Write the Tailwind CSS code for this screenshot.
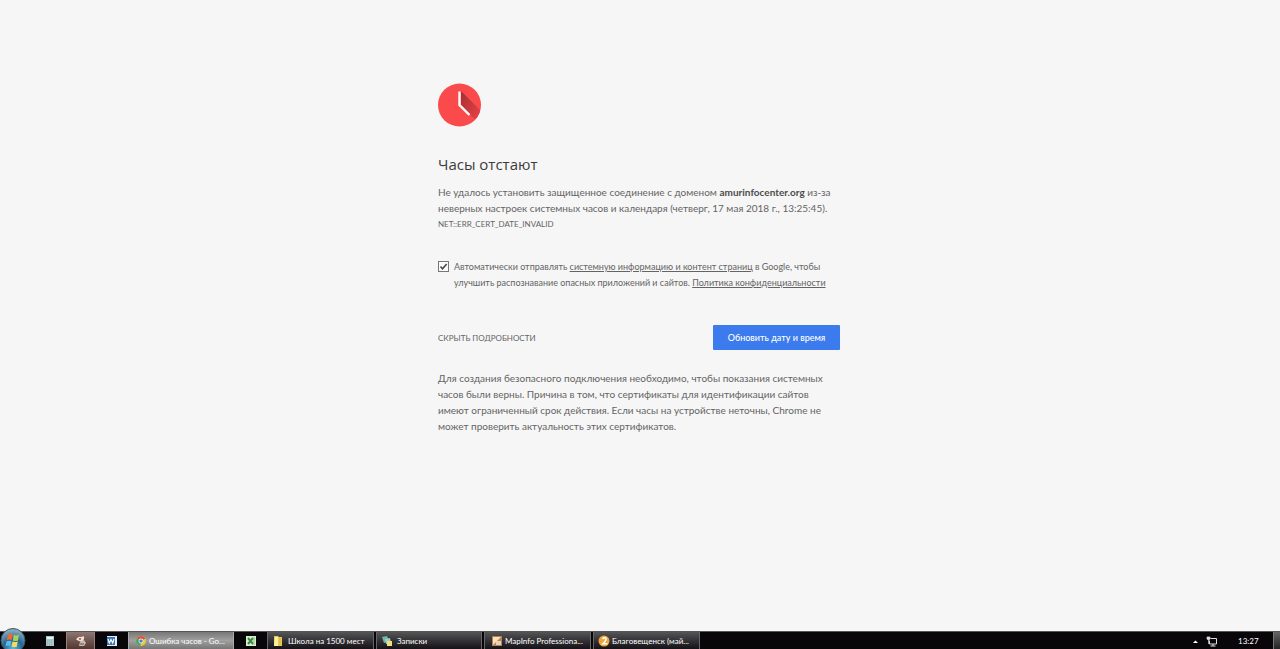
<!DOCTYPE html>
<html lang="ru">
<head>
  <meta charset="UTF-8" />
  <meta name="viewport" content="width=device-width, initial-scale=1.0" />
  <title>Ошибка часов</title>
  <script src="https://cdn.jsdelivr.net/npm/@tailwindcss/browser@4"></script>
</head>
<body class="min-h-screen flex flex-col bg-[#f6f6f6] text-[#646464] font-['Lato','Noto_Sans',sans-serif]">

  <!-- Error page -->
  <main class="flex-1 w-full max-w-[404px] mx-auto pt-[83px] pb-8 pr-0.5">
    <svg class="w-11 h-11" viewBox="0 0 44 44" aria-hidden="true">
      <defs>
        <clipPath id="face"><circle cx="21.5" cy="22" r="21.5" /></clipPath>
        <linearGradient id="shade" x1="0" y1="0" x2="1" y2="1">
          <stop offset="0" stop-color="#a52f31" />
          <stop offset="1" stop-color="#ed4346" />
        </linearGradient>
      </defs>
      <circle cx="21.5" cy="22" r="21.5" fill="#fb4a4c" />
      <path clip-path="url(#face)" fill="url(#shade)" d="M23 8 L43 28 L38 37 L31 31 L23 23Z" />
      <path d="M21.500 8.500V22L31.500 32" fill="none" stroke="#fff" stroke-width="2.400" />
    </svg>

    <h1 class="mt-[27px] text-[15px] leading-5 text-[#3c3c3c] font-['Open_Sans','Noto_Sans',sans-serif]">Часы отстают</h1>

    <p class="mt-2.5 text-[10px] leading-4 whitespace-nowrap">
      Не удалось установить защищенное соединение с доменом <strong class="font-bold text-[#4c4c4c]">amurinfocenter.org</strong> из-за<br />
      неверных настроек системных часов и календаря (четверг, 17 мая 2018 г., 13:25:45).
    </p>
    <div class="text-[8px] leading-4">NET::ERR_CERT_DATE_INVALID</div>

    <div class="mt-[27px] flex">
      <div class="relative w-4 shrink-0 pt-0.5">
        <input id="optIn" type="checkbox" checked class="peer block appearance-none w-[11px] h-[11px] border border-[#777] bg-[#fafafa]" />
        <svg class="absolute left-0 top-0.5 w-[11px] h-[11px] pointer-events-none hidden peer-checked:block" viewBox="0 0 11 11">
          <path d="M2.500 5.500L4.500 7.800L8.700 3" fill="none" stroke="#444" stroke-width="1.500" />
        </svg>
      </div>
      <label for="optIn" class="text-[9px] leading-4 whitespace-nowrap">
        Автоматически отправлять <a href="#" class="underline">системную информацию и контент страниц</a> в Google, чтобы<br />
        улучшить распознавание опасных приложений и сайтов. <a href="#" class="underline">Политика конфиденциальности</a>
      </label>
    </div>

    <div class="mt-[34px] flex items-center justify-between">
      <button type="button" id="detailsBtn" class="text-[8px] leading-4">СКРЫТЬ ПОДРОБНОСТИ</button>
      <button type="button" class="w-[127px] h-[25px] rounded-[1px] bg-[#3b7bed] text-white text-[9px] font-medium">Обновить дату и время</button>
    </div>

    <p id="details" class="mt-5 text-[10px] leading-4 whitespace-nowrap">
      Для создания безопасного подключения необходимо, чтобы показания системных<br />
      часов были верны. Причина в том, что сертификаты для идентификации сайтов<br />
      имеют ограниченный срок действия. Если часы на устройстве неточны, Chrome не<br />
      может проверить актуальность этих сертификатов.
    </p>
  </main>

  <!-- Taskbar -->
  <footer class="relative h-[18px] flex items-stretch bg-[#09060a] border-t border-[#555] text-white text-[8px] leading-4">
    <div class="w-[42px] shrink-0">
      <button type="button" aria-label="Пуск" class="absolute left-0 bottom-0 w-7 h-[21px]">
        <svg class="w-7 h-[21px]" viewBox="0 0 28 21">
          <defs>
            <radialGradient id="orb" cx="0.500" cy="0.850" r="0.800">
              <stop offset="0" stop-color="#53bce0" />
              <stop offset="0.500" stop-color="#28648f" />
              <stop offset="1" stop-color="#8bafc1" />
            </radialGradient>
          </defs>
          <circle cx="13" cy="12.500" r="12" fill="url(#orb)" stroke="#375466" />
          <path d="M8 6.500q2.500-1.500 4.800-.3L11.600 12q-2.500-1-4.800.2z" fill="#ec6b35" />
          <path d="M13.800 6.800q2.600 1.200 5.200 0L18 12.500q-2.600 1-5.200 0z" fill="#a2d35f" />
          <path d="M6.500 13.300q2.300-1.200 4.800-.2L10.200 18q-2.300-1-4.700.2z" fill="#5fb7ea" />
          <path d="M12.600 13.500q2.500 1.200 5.200 0L16.700 18.700q-2.600 1-5.200-.2z" fill="#fbd75a" />
        </svg>
      </button>
    </div>

    <button type="button" aria-label="Калькулятор" class="w-6 shrink-0 flex items-center pl-0.5">
      <svg class="w-3 h-3" viewBox="0 0 12 12">
        <rect x="2" y="1" width="8" height="10" fill="#a9c6ca" />
        <rect x="3" y="2" width="6" height="2" fill="#e5f6f5" />
        <path d="M3 6h6M3 8h6M3 10h6" stroke="#8fb0b8" stroke-dasharray="1 1" />
      </svg>
    </button>
    <button type="button" aria-label="Приложение" class="w-[29px] shrink-0 flex items-center justify-center border-x border-[#98817b] bg-linear-to-b from-[#8b7773] to-[#533731]">
      <svg class="w-3 h-3" viewBox="0 0 12 12">
        <path d="M1 4.500Q3 1 6 2Q10 0 9 4L7 7L4 6Z" fill="#f6ddd1" />
        <path d="M5 7L9 5L11 8L9 11H4Z" fill="#d8b3a4" />
        <circle cx="5" cy="4" r="1" fill="#a3503d" />
        <path d="M5 9L9 9" stroke="#748e9e" stroke-width="2" />
      </svg>
    </button>
    <button type="button" aria-label="Word" class="w-[33px] shrink-0 flex items-center justify-center">
      <svg class="w-3 h-3" viewBox="0 0 12 12">
        <rect x="1" y="1" width="10" height="10" fill="#e3edf8" />
        <rect x="1" y="2" width="8" height="8" fill="#3975ba" />
        <path d="M2 4l1.300 4L5 4.500L6.700 8L8 4" fill="none" stroke="#fff" stroke-width="1.200" />
      </svg>
    </button>

    <button type="button" class="w-[106px] shrink-0 flex items-center gap-0.5 pl-1.5 border-x border-[#aaa] bg-linear-to-b from-[#777] via-[#a0a0a0] to-[#777] whitespace-nowrap">
      <svg class="w-3 h-3 shrink-0" viewBox="0 0 12 12">
        <circle cx="6" cy="6" r="5" fill="#f0c63d" />
        <path d="M6 6L1.700 3.500A5 5 0 0 1 10.300 3.500z" fill="#d95040" />
        <path d="M6 6L1.700 3.500A5 5 0 0 0 5.500 11z" fill="#48a668" />
        <circle cx="6" cy="6" r="2.400" fill="#fff" />
        <circle cx="6" cy="6" r="1.800" fill="#4a83cf" />
      </svg>
      Ошибка часов - Go...
    </button>
    <button type="button" aria-label="Excel" class="w-[33px] shrink-0 flex items-center justify-center">
      <svg class="w-3 h-3" viewBox="0 0 12 12">
        <rect x="1" y="1" width="10" height="10" fill="#d8eed1" />
        <path d="M3 3L8 9M8 3L3 9" stroke="#3b8a3d" stroke-width="2" />
        <path d="M9 2v8" stroke="#8cc084" />
      </svg>
    </button>

    <div class="flex gap-0.5">
      <button type="button" class="w-[107px] flex items-center gap-1 pl-1 border-x border-[#666] bg-linear-to-b from-[#555457] to-[#151317] whitespace-nowrap">
        <svg class="w-3 h-3 shrink-0" viewBox="0 0 12 12">
          <path d="M2 1h4l1 1h3v9H2z" fill="#e9c956" />
          <path d="M3 2h3v9H2z" fill="#fff0a0" />
          <path d="M8 3v7" stroke="#d8b34a" />
        </svg>
        Школа на 1500 мест
      </button>
      <button type="button" class="w-[106px] flex items-center gap-1 pl-1 border-x border-[#666] bg-linear-to-b from-[#555457] to-[#151317] whitespace-nowrap">
        <svg class="w-3 h-3 shrink-0" viewBox="0 0 12 12">
          <path d="M1 2l5-1l2 5l-5 2z" fill="#73b7a0" />
          <path d="M4 4l5-1l1 5l-5 1z" fill="#9dcbd0" />
          <path d="M6 6h5v5H6z" fill="#f2df77" />
        </svg>
        Записки
      </button>
      <button type="button" class="w-[107px] flex items-center gap-0.5 pl-1.5 border-x border-[#666] bg-linear-to-b from-[#555457] to-[#151317] whitespace-nowrap">
        <svg class="w-3 h-3 shrink-0" viewBox="0 0 12 12">
          <rect x="1" y="1" width="10" height="10" fill="#b68151" />
          <path d="M2 2h8L2 10z" fill="#f7e0bf" />
          <path d="M5 10V6h5v4z" fill="#ead0b4" />
        </svg>
        MapInfo Professiona...
      </button>
      <button type="button" class="w-[107px] flex items-center gap-0.5 pl-1 border-x border-[#666] bg-linear-to-b from-[#555457] to-[#151317] whitespace-nowrap">
        <svg class="w-3 h-3 shrink-0" viewBox="0 0 12 12">
          <circle cx="6" cy="6" r="5.500" fill="#efa43a" />
          <path d="M4.500 4Q6.500 1.500 8 3.500Q8.500 5.500 5 8.700H9.500" fill="none" stroke="#fff" stroke-width="1.600" />
        </svg>
        Благовещенск (май...
      </button>
    </div>

    <!-- Tray -->
    <div class="ml-auto flex items-center">
      <button type="button" aria-label="Скрытые значки" class="w-3 h-4">
        <svg class="w-3 h-4" viewBox="0 0 12 16"><path d="M3 10L5.500 7.500L8 10z" fill="#fff" /></svg>
      </button>
      <svg class="ml-1 w-3 h-3" viewBox="0 0 12 12" role="img" aria-label="Сеть">
        <path d="M4.500 3.500H10.500V9H3.500V5.500M7 9v2M4.500 11h5" fill="none" stroke="#ddd" />
        <path d="M1 2h3v2q-1.500 2-3 0zM2.500 5v4" fill="#ddd" stroke="#ddd" stroke-width="0.700" />
      </svg>
      <time class="ml-5 w-5">13:27</time>
      <button type="button" aria-label="Свернуть все окна" class="ml-[15px] w-[7px] h-[17px] border-l border-[#777] bg-linear-to-b from-[#666] to-[#242424]"></button>
    </div>
  </footer>

  <script>
    const detailsBtn = document.getElementById('detailsBtn');
    const details = document.getElementById('details');

    detailsBtn.addEventListener('click', () => {
      const hidden = details.classList.toggle('hidden');
      detailsBtn.innerText = hidden ? 'ПОДРОБНЕЕ' : 'СКРЫТЬ ПОДРОБНОСТИ';
    });
  </script>
</body>
</html>
